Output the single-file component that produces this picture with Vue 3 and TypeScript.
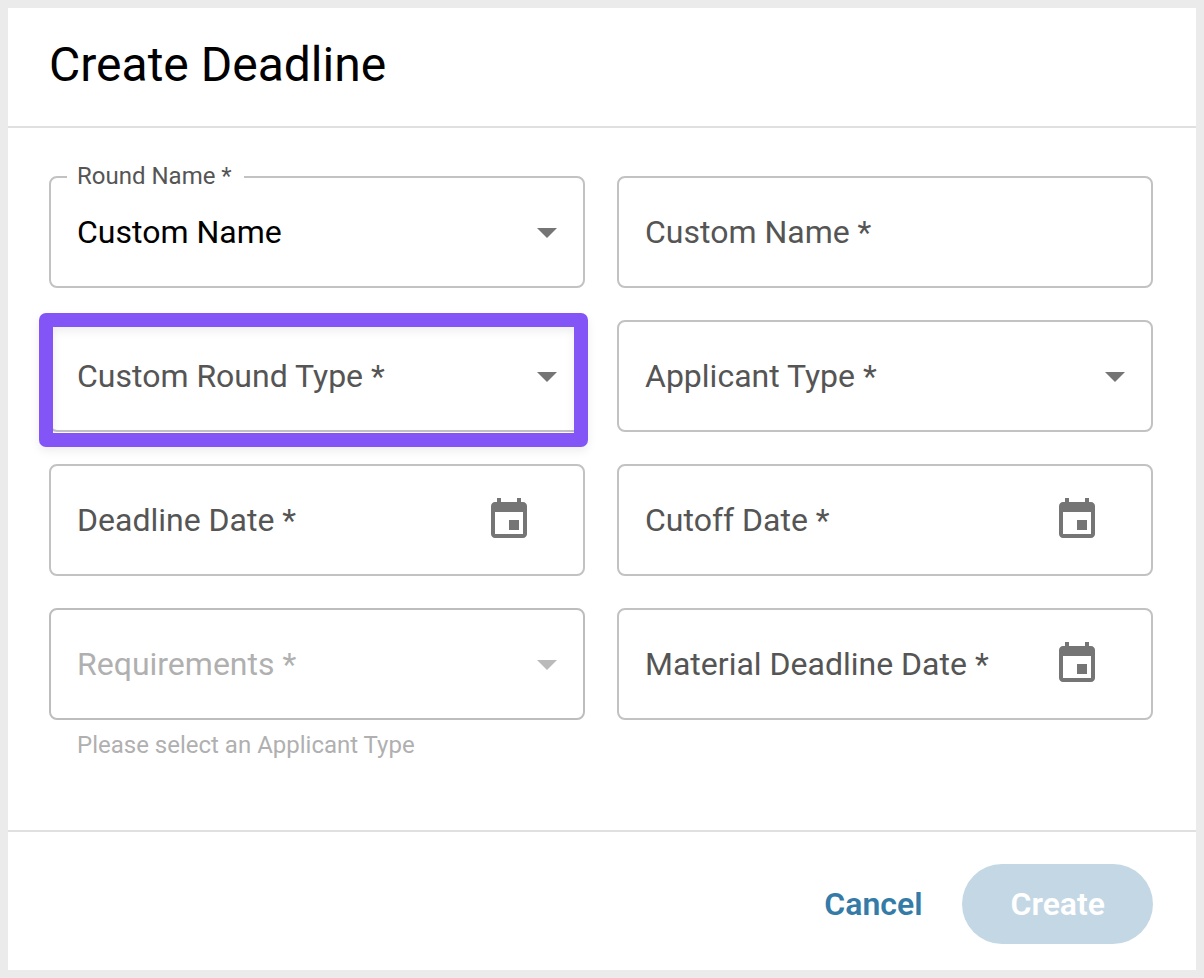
<script setup lang="ts">
import { reactive } from 'vue'

type FieldKind = 'select' | 'text' | 'date'

interface Field {
  id: string
  label: string
  kind: FieldKind
  options?: string[]
  disabled?: boolean
  hint?: string
  highlighted?: boolean
}

const fields: Field[] = [
  { id: 'round-name', label: 'Round Name', kind: 'select', options: ['Custom Name'] },
  { id: 'custom-name', label: 'Custom Name', kind: 'text' },
  { id: 'round-type', label: 'Custom Round Type', kind: 'select', options: [], highlighted: true },
  { id: 'applicant-type', label: 'Applicant Type', kind: 'select', options: [] },
  { id: 'deadline-date', label: 'Deadline Date', kind: 'date' },
  { id: 'cutoff-date', label: 'Cutoff Date', kind: 'date' },
  {
    id: 'requirements',
    label: 'Requirements',
    kind: 'select',
    options: [],
    disabled: true,
    hint: 'Please select an Applicant Type',
  },
  { id: 'material-date', label: 'Material Deadline Date', kind: 'date' },
]

const values = reactive<Record<string, string>>({
  'round-name': 'Custom Name',
  'custom-name': '',
  'round-type': '',
  'applicant-type': '',
  'deadline-date': '',
  'cutoff-date': '',
  requirements: '',
  'material-date': '',
})
</script>

<template>
  <main class="page">
    <form class="dialog" @submit.prevent>
      <header class="dialog-header">
        <h1 class="title">Create Deadline</h1>
      </header>

      <div class="dialog-body">
        <div v-for="field in fields" :key="field.id" class="field">
          <div class="box" :class="{ disabled: field.disabled, filled: values[field.id] }">
            <label class="label" :for="field.id">{{ field.label }} *</label>
            <select
              v-if="field.kind === 'select'"
              :id="field.id"
              v-model="values[field.id]"
              class="control"
              :disabled="field.disabled"
            >
              <option value=""></option>
              <option v-for="option in field.options" :key="option">{{ option }}</option>
            </select>
            <input v-else :id="field.id" v-model="values[field.id]" class="control" type="text" />
            <svg v-if="field.kind === 'select'" class="arrow" viewBox="0 0 20 10" aria-hidden="true">
              <path d="M0 0h20L10 10z" />
            </svg>
            <button v-if="field.kind === 'date'" class="picker" type="button" :aria-label="`Choose ${field.label}`">
              <svg class="calendar" viewBox="0 0 24 24" aria-hidden="true">
                <path
                  d="M17 12h-5v5h5v-5zM16 1v2H8V1H6v2H5c-1.11 0-1.99.9-1.99 2L3 19c0 1.1.89 2 2 2h14c1.1 0 2-.9 2-2V5c0-1.1-.9-2-2-2h-1V1h-2zm3 18H5V8h14v11z"
                />
              </svg>
            </button>
          </div>
          <p v-if="field.hint" class="hint">{{ field.hint }}</p>
          <div v-if="field.highlighted" class="highlight"></div>
        </div>
      </div>

      <footer class="dialog-footer">
        <button class="button cancel" type="button">Cancel</button>
        <button class="button create" type="submit" disabled>Create</button>
      </footer>
    </form>
  </main>
</template>

<style>
body {
  background: #ebebeb;
}
</style>

<style scoped>
.page {
  box-sizing: border-box;
  display: flex;
  min-height: 100vh;
  padding: 8px;
  font-family: Roboto, 'Liberation Sans', sans-serif;
  color: #000;
}

.dialog {
  display: flex;
  flex: 1;
  flex-direction: column;
  background: #fff;
}

.dialog-header {
  padding: 25px 43px 29px 41px;
  border-bottom: 2px solid #e0e0e0;
}

.title {
  margin: 0;
  font-size: 48px;
  font-weight: 400;
  line-height: 64px;
}

.dialog-body {
  display: grid;
  flex: 1;
  grid-template-columns: repeat(2, minmax(0, 1fr));
  align-content: start;
  gap: 32px;
  padding: 48px 43px 32px 41px;
}

.field {
  position: relative;
}

.box {
  box-sizing: border-box;
  display: grid;
  grid-template-columns: 1fr auto;
  align-items: center;
  height: 112px;
  border: 2px solid #c2c2c2;
  border-radius: 8px;
}

.label {
  grid-area: 1 / 1;
  z-index: 1;
  justify-self: start;
  padding-left: 26px;
  font-size: 32px;
  line-height: 48px;
  color: #555;
  white-space: nowrap;
  pointer-events: none;
}

.filled .label {
  position: absolute;
  top: -16px;
  left: 18px;
  padding: 0 12px 0 10px;
  background: #fff;
  font-size: 24px;
  line-height: 32px;
}

.control {
  box-sizing: border-box;
  grid-area: 1 / 1 / 2 / 3;
  width: 100%;
  height: 108px;
  margin: 0;
  padding: 0 26px;
  border: 0;
  border-radius: 8px;
  outline: 0;
  appearance: none;
  background: transparent;
  font-family: inherit;
  font-size: 32px;
  color: #000;
}

.arrow {
  grid-area: 1 / 2;
  width: 20px;
  height: 10px;
  margin: 2px 26px 0 0;
  fill: #757575;
  pointer-events: none;
}

.picker {
  display: flex;
  grid-area: 1 / 2;
  z-index: 1;
  margin: 0 26px 0 0;
  padding: 24px;
  border: 0;
  background: transparent;
}

.calendar {
  width: 48px;
  height: 48px;
  fill: #757575;
}

.disabled {
  border-color: #bdbdbd;
}

.disabled .label {
  color: #b0b0b0;
}

.disabled .arrow {
  fill: #bababa;
}

.hint {
  margin: 9px 28px 0;
  font-size: 24px;
  line-height: 32px;
  color: #b0b0b0;
}

.highlight {
  position: absolute;
  inset: -7px -3px -15px -10px;
  border: 14px solid #8355f6;
  border-radius: 7px;
  filter: drop-shadow(0 4px 4px rgba(0, 0, 0, 0.07));
  pointer-events: none;
}

.dialog-footer {
  display: flex;
  justify-content: flex-end;
  gap: 8px;
  padding: 32px 43px 26px;
  border-top: 2px solid #e0e0e0;
}

.button {
  height: 80px;
  margin: 0;
  border: 0;
  border-radius: 40px;
  background: transparent;
  font-family: inherit;
  font-size: 32px;
  font-weight: 600;
}

.cancel {
  padding: 0 32px;
  color: #347ba7;
}

.create {
  padding: 0 48px;
  background: #c4d7e4;
  color: #fff;
}
</style>
